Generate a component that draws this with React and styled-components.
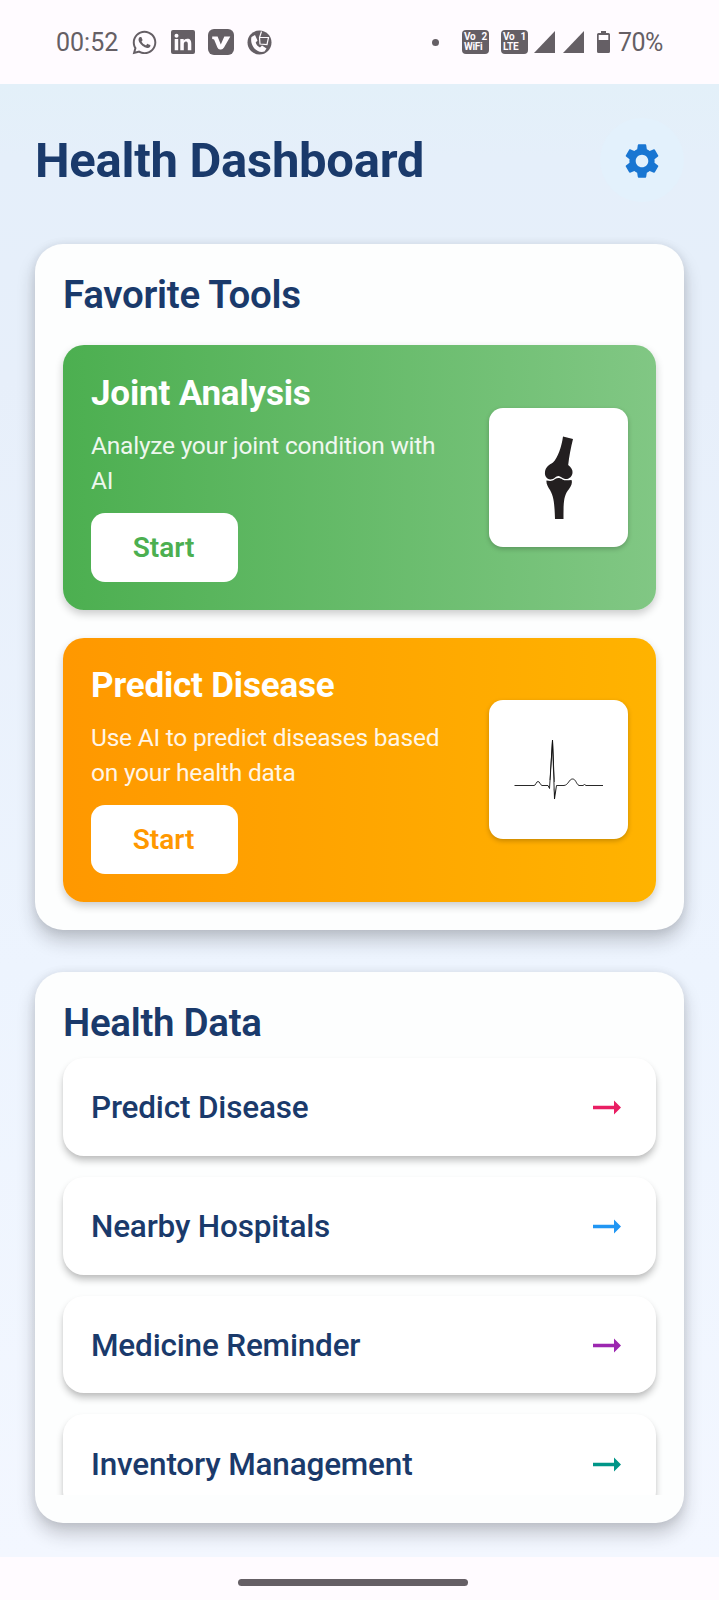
import React from "react";
import styled, { createGlobalStyle } from "styled-components";
import { FaWhatsapp } from "react-icons/fa";
import { MdSettings } from "react-icons/md";

const GlobalStyle = createGlobalStyle`
  *, *::before, *::after { box-sizing: border-box; }
  body { margin: 0; background: #fffbff; font-family: Roboto, "Liberation Sans", sans-serif; }
  svg { display: block; flex: none; }
  h1, h2, h3, p { margin: 0; }
`;

const Screen = styled.div`
  width: 719px;
  height: 1600px;
  display: flex;
  flex-direction: column;
  overflow: hidden;
`;

const StatusBar = styled.header`
  height: 84px;
  flex: none;
  display: flex;
  align-items: center;
  justify-content: space-between;
  padding: 0 56px 0 55px;
  color: #655f65;
  font-size: 25px;
  line-height: 30px;
`;

const StatusGroup = styled.div`
  display: flex;
  align-items: center;
`;

const Clock = styled.span`
  width: 63px;
  margin-right: 13px;
  padding: 2px 0 0 1px;
  white-space: nowrap;
`;

const AppIcons = styled.div`
  display: flex;
  align-items: center;
  gap: 13px;
`;

const Dot = styled.span`
  width: 7px;
  height: 7px;
  border-radius: 50%;
  background: currentColor;
  margin-right: 23px;
`;

const NetBadge = styled.span`
  width: 27px;
  height: 24px;
  margin-right: ${(p) => p.$gap}px;
  padding: 2px 2px 0;
  border-radius: 4px;
  background: #655f65;
  color: #fffbff;
  font-size: 10px;
  font-weight: 700;
  line-height: 10px;
  display: flex;
  flex-direction: column;
`;

const BadgeLine = styled.span`
  display: flex;
  justify-content: space-between;
  letter-spacing: -0.3px;
`;

const Battery = styled.span`
  margin-left: 5px;
  margin-right: 8px;
`;

const Percent = styled.span`
  width: 45px;
  padding-top: 2px;
  white-space: nowrap;
  letter-spacing: -0.6px;
`;

const Page = styled.main`
  height: 1473px;
  flex: none;
  padding: 34px 35px 0;
  overflow: hidden;
  background: linear-gradient(180deg, #e3f0f9 0%, #e5effa 5%, #e7effa 20%, #edf4fe 60%, #f3f7ff 100%);
  color: #1a3a6b;
`;

const TitleRow = styled.div`
  height: 84px;
  display: flex;
  align-items: center;
  justify-content: space-between;
`;

const Title = styled.h1`
  padding-top: 2px;
  font-size: 49px;
  font-weight: 700;
  line-height: 58px;
  letter-spacing: -0.28px;
`;

const SettingsButton = styled.button`
  width: 84px;
  height: 84px;
  border: 0;
  border-radius: 50%;
  padding: 1px 0 0;
  background: #e3f1fc;
  color: #1976d2;
  display: grid;
  place-items: center;
`;

const Card = styled.section`
  height: ${(p) => p.$height}px;
  margin-top: ${(p) => p.$top}px;
  padding: 28px;
  border-radius: 28px;
  background: #fdfefe;
  box-shadow: 0 11px 18px rgba(30, 30, 35, 0.22), 0 1px 10px rgba(30, 30, 35, 0.1);
`;

const CardTitle = styled.h2`
  font-size: 38.5px;
  font-weight: 600;
  line-height: 46px;
  letter-spacing: -0.3px;
`;

const Tools = styled.div`
  margin-top: 27px;
  display: flex;
  flex-direction: column;
  gap: 28px;
`;

const ToolCard = styled.article`
  height: 264.5px;
  padding: 28px;
  border-radius: 21px;
  background: linear-gradient(90deg, ${(p) => p.$from}, ${(p) => p.$to});
  box-shadow: 0 4px 9px rgba(0, 0, 0, 0.2);
  color: #fff;
  display: flex;
  align-items: center;
  justify-content: space-between;
`;

const ToolText = styled.div`
  width: 370px;
`;

const ToolName = styled.h3`
  font-size: 35px;
  font-weight: 700;
  line-height: 41px;
  letter-spacing: -0.18px;
`;

const ToolDescription = styled.p`
  margin: 14px 0 15px;
  font-size: 24.5px;
  line-height: 35px;
  letter-spacing: -0.22px;
  opacity: 0.9;
`;

const StartButton = styled.button`
  width: 147px;
  height: 69px;
  display: block;
  border: 0;
  border-radius: 14px;
  padding: 0 2px 0 0;
  background: #fff;
  color: ${(p) => p.$color};
  font: 600 28px Roboto, "Liberation Sans", sans-serif;
`;

const Picture = styled.div`
  width: 139px;
  height: 139px;
  border-radius: 14px;
  background: #fff;
  box-shadow: 0 2px 5px rgba(0, 0, 0, 0.22);
`;

const List = styled.div`
  height: 437px;
  margin-top: 12px;
  clip-path: inset(-12px -28px 0);
  display: flex;
  flex-direction: column;
  gap: 21px;
`;

const ListRow = styled.div`
  height: 97.8px;
  flex: none;
  padding: 2px 35px 0 28px;
  border-radius: 21px;
  background: #fff;
  box-shadow: 0 5px 7px rgba(0, 0, 0, 0.22), 0 2px 3px rgba(0, 0, 0, 0.04);
  display: flex;
  align-items: center;
  justify-content: space-between;
  font-size: 31.5px;
  font-weight: 500;
  letter-spacing: -0.18px;
  color: #1a3a6b;
`;

const NavBar = styled.footer`
  flex: 1;
  padding: 22px 0 0 238px;
`;

const Handle = styled.div`
  width: 230px;
  height: 7px;
  border-radius: 4px;
  background: #655f65;
`;

const LinkedIn = () => (
  <svg width="24" height="24" viewBox="0 0 24 24">
    <rect width="24" height="24" rx="2" fill="#655f65" />
    <g fill="#fffbff">
      <circle cx="5.5" cy="5.7" r="2" />
      <path d="M3.7 9h3.5v11.2H3.7zM9.3 9h3.4v1.6c.6-1.1 1.8-1.9 3.5-1.9 3.3 0 4.1 2.1 4.1 5v6.5h-3.5v-5.8c0-1.5-.1-2.9-1.8-2.9s-2.2 1.4-2.2 2.9v5.8H9.3z" />
    </g>
  </svg>
);

const VideoApp = () => (
  <svg width="26" height="26" viewBox="0 0 26 26">
    <rect width="26" height="26" rx="6" fill="#655f65" />
    <path d="M4.200 7.500H9.600L12.800 15.500L16.300 7.500H22.300L16 18.500Q14.800 20.500 13 20.500H12Q10.300 20.500 9.400 18.500L6.200 10.800Q5.800 9.900 4.200 9.900z" fill="#fffbff" />
  </svg>
);

const CallerApp = () => (
  <svg width="25" height="25" viewBox="0 0 25 25">
    <circle cx="12.5" cy="12.5" r="12" fill="#655f65" />
    <path d="M4.500 7L8 5L10.500 10.500L8.700 12.500C9.300 14.800 10.800 16.500 13 17.500L15 15.500L19.500 18.500L17.500 21.500C13.500 22.800 9.500 21 7 18C4.500 15 3.500 10.500 4.500 7z" fill="#fffbff" />
    <path d="M14.500 1.500L12.500 7.500L13 14L20 14.500L21.500 7.500L12.500 7.500" fill="none" stroke="#fffbff" strokeWidth="1.200" />
  </svg>
);

const Signal = ({ width }) => (
  <svg width={width} height="22" viewBox={`0 0 ${width} 22`}>
    <path d="M0 22L21 0V22z" fill="#655f65" />
  </svg>
);

const BatteryIcon = () => (
  <svg width="13" height="22" viewBox="0 0 13 22">
    <path d="M4 0h5v2h2.500q1.500 0 1.500 1.500v17q0 1.500-1.500 1.500h-10Q0 22 0 20.500v-17Q0 2 1.500 2H4z" fill="#655f65" />
    <path d="M1.700 4h9.600v5H1.700z" fill="#fffbff" />
  </svg>
);

const JointPicture = () => (
  <svg width="139" height="139" viewBox="0 0 139 139">
    <g fill="#231f20">
      <path d="M74 28.500L84 31C82 39 80 49 79.200 57C82 59 84 62 83.500 65C83 69 79.500 71.500 76 71C73 70.500 71.500 68 69.500 68C67 68 65 71.500 61.500 71.500C57.500 71 55.500 68 56 64C56.500 59 60 57 64 54.500C69 49.500 72.500 39 74 28.500z" />
      <path d="M57.500 72.500C61 73 63 73.500 66 71C68.500 69.500 71 69.500 73.500 71.500C76 73 79 72 82.500 72C84 76 81 79.500 78.500 83C74.500 89 74.500 96 74.500 111H66C65.500 99 65.500 90 61 82C59 79 57 76 57.500 72.500z" />
    </g>
  </svg>
);

const PulsePicture = () => (
  <svg width="139" height="139" viewBox="0 0 139 139">
    <path d="M25.500 85.500H45C47 85.500 47 81.500 49 81.500S51 85 53 85.500H59L60.500 88.500L63.500 41L65.500 99L67.500 85.500H75C79.500 85 80 79 83.500 79S87 84 90 85.500H94L95.500 84.500L97 85.500H114" fill="none" stroke="#111" strokeWidth="0.900" />
    <path d="M60.700 80L63 40H64L65.700 82H65.200L63.300 50L61.300 80zM64.700 87L65.400 99.500L67 87L65.500 94z" fill="#111" />
  </svg>
);

const Arrow = ({ color }) => (
  <svg width="28" height="15" viewBox="0 0 28 15">
    <path d="M0 5.800H21V.5L28 7.500L21 14.500V9.200H0z" fill={color} />
  </svg>
);

const TOOLS = [
  {
    name: "Joint Analysis",
    text: "Analyze your joint condition with AI",
    from: "#4caf50",
    to: "#81c784",
    Art: JointPicture,
  },
  {
    name: "Predict Disease",
    text: "Use AI to predict diseases based on your health data",
    from: "#ff9800",
    to: "#ffb300",
    Art: PulsePicture,
  },
];

const LINKS = [
  ["Predict Disease", "#e91e63"],
  ["Nearby Hospitals", "#2196f3"],
  ["Medicine Reminder", "#9c27b0"],
  ["Inventory Management", "#009688"],
];

export default function App() {
  return (
    <Screen>
      <GlobalStyle />
      <StatusBar>
        <StatusGroup>
          <Clock>00:52</Clock>
          <AppIcons>
            <FaWhatsapp size={27} />
            <LinkedIn />
            <VideoApp />
            <CallerApp />
          </AppIcons>
        </StatusGroup>
        <StatusGroup>
          <Dot />
          <NetBadge $gap={12}>
            <BadgeLine><span>Vo</span><span>2</span></BadgeLine>
            <BadgeLine>WiFi</BadgeLine>
          </NetBadge>
          <NetBadge $gap={6}>
            <BadgeLine><span>Vo</span><span>1</span></BadgeLine>
            <BadgeLine>LTE</BadgeLine>
          </NetBadge>
          <Signal width={29} />
          <Signal width={29} />
          <Battery><BatteryIcon /></Battery>
          <Percent>70%</Percent>
        </StatusGroup>
      </StatusBar>
      <Page>
        <TitleRow>
          <Title>Health Dashboard</Title>
          <SettingsButton aria-label="Settings"><MdSettings size={42} /></SettingsButton>
        </TitleRow>
        <Card $height={686} $top={42}>
          <CardTitle>Favorite Tools</CardTitle>
          <Tools>
            {TOOLS.map(({ name, text, from, to, Art }) => (
              <ToolCard key={name} $from={from} $to={to}>
                <ToolText>
                  <ToolName>{name}</ToolName>
                  <ToolDescription>{text}</ToolDescription>
                  <StartButton $color={from}>Start</StartButton>
                </ToolText>
                <Picture><Art /></Picture>
              </ToolCard>
            ))}
          </Tools>
        </Card>
        <Card $height={551} $top={42}>
          <CardTitle>Health Data</CardTitle>
          <List>
            {LINKS.map(([label, color]) => (
              <ListRow key={label}>
                {label}
                <Arrow color={color} />
              </ListRow>
            ))}
          </List>
        </Card>
      </Page>
      <NavBar><Handle /></NavBar>
    </Screen>
  );
}
